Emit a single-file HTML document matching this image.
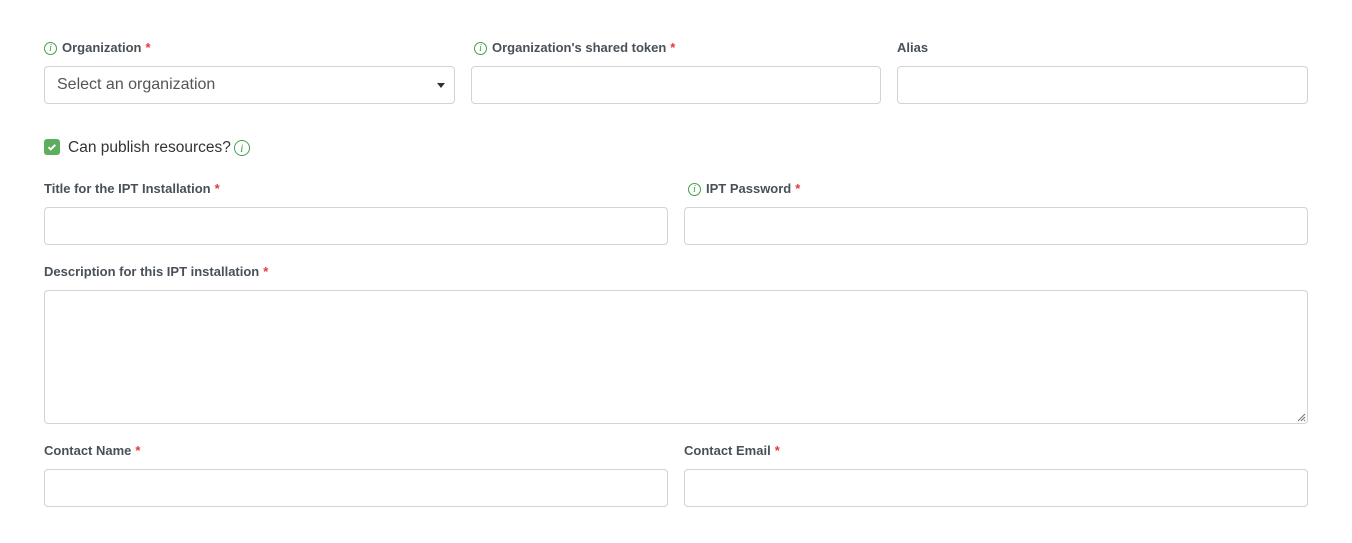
<!DOCTYPE html>
<html><head><meta charset="utf-8"><style>
body{margin:0;width:1352px;height:543px;background:#fff;font-family:"Liberation Sans",Arial,sans-serif;position:relative;overflow:hidden}
.l{position:absolute;font-size:13px;font-weight:bold;color:#495057;line-height:16px;white-space:nowrap;display:flex;align-items:center}
.l b{color:#e5383b;margin-left:4px;font-weight:bold}
.i{width:11px;height:11px;border:1px solid #43a047;border-radius:50%;color:#43a047;font:italic 10px "Liberation Serif",serif;display:inline-flex;align-items:center;justify-content:center;margin-right:5px;box-sizing:content-box}
.f{position:absolute;border:1px solid #ced4da;border-radius:4px;box-sizing:border-box;background:#fff}
</style></head><body>
<div class="l" style="left:44px;top:40px"><span class="i">i</span>Organization<b>*</b></div>
<div class="l" style="left:474px;top:40px"><span class="i">i</span>Organization's shared token<b>*</b></div>
<div class="l" style="left:897px;top:40px">Alias</div>
<div class="f" style="left:44px;top:66px;width:411px;height:38px"><span style="position:absolute;left:12px;top:9px;font-size:16px;color:#555">Select an organization</span><span style="position:absolute;right:9px;top:16px;width:0;height:0;border-left:4px solid transparent;border-right:4px solid transparent;border-top:5px solid #333"></span></div>
<div class="f" style="left:471px;top:66px;width:410px;height:38px"></div>
<div class="f" style="left:897px;top:66px;width:411px;height:38px"></div>
<div style="position:absolute;left:44px;top:139px;width:16px;height:16px;background:#5cad5c;border-radius:3px"><svg width="16" height="16" viewBox="0 0 16 16"><path d="M4.5 8.2l2.3 2.2 4.5-4.6" stroke="#fff" stroke-width="2" fill="none"/></svg></div>
<div style="position:absolute;left:68px;top:139px;font-size:15.5px;color:#333;display:flex;align-items:center;line-height:18px">Can publish resources?<span class="i" style="margin-left:3px;width:14px;height:14px;font-size:12px">i</span></div>
<div class="l" style="left:44px;top:181px">Title for the IPT Installation<b>*</b></div>
<div class="l" style="left:688px;top:181px"><span class="i">i</span>IPT Password<b>*</b></div>
<div class="f" style="left:44px;top:207px;width:624px;height:38px"></div>
<div class="f" style="left:684px;top:207px;width:624px;height:38px"></div>
<div class="l" style="left:44px;top:264px">Description for this IPT installation<b>*</b></div>
<div class="f" style="left:44px;top:290px;width:1264px;height:134px"><svg style="position:absolute;right:1px;bottom:1px" width="9" height="9"><path d="M1 8L8 1M4 8L8 4M7 8L8 7" stroke="#777" stroke-width="1"/></svg></div>
<div class="l" style="left:44px;top:443px">Contact Name<b>*</b></div>
<div class="l" style="left:684px;top:443px">Contact Email<b>*</b></div>
<div class="f" style="left:44px;top:469px;width:624px;height:38px"></div>
<div class="f" style="left:684px;top:469px;width:624px;height:38px"></div>
</body></html>
